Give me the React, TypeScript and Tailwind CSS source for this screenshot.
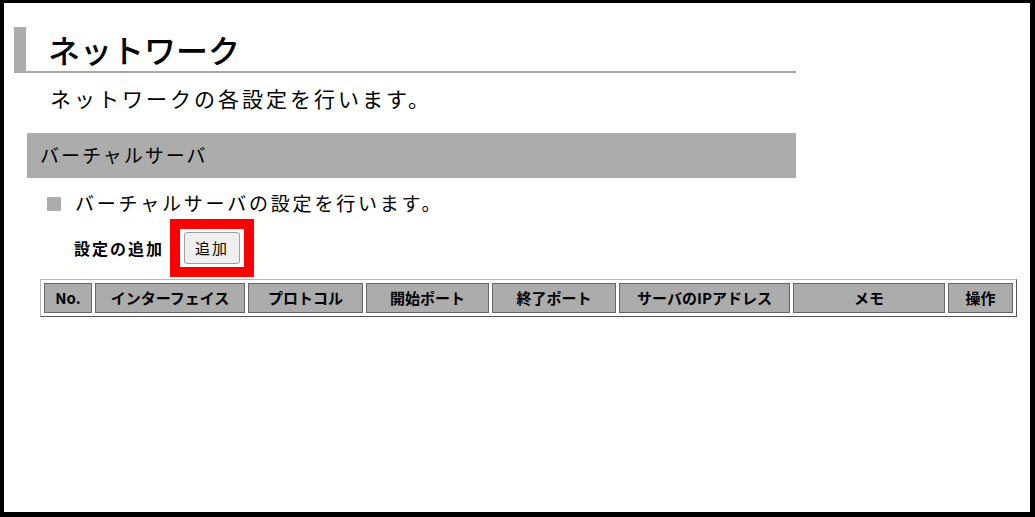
const columns = [
  { label: "No.", width: "w-[48px]" },
  { label: "インターフェイス", width: "w-[150px]" },
  { label: "プロトコル", width: "w-[115px]" },
  { label: "開始ポート", width: "w-[123px]" },
  { label: "終了ポート", width: "w-[124px]" },
  { label: "サーバのIPアドレス", width: "w-[171px]" },
  { label: "メモ", width: "w-[152px]" },
  { label: "操作", width: "w-[65px]" }
];

export default function App() {
  return (
    <div className="h-[517px] w-[1035px] overflow-hidden border-b-[5px] border-l-4 border-r-[5px] border-t-[3px] border-black bg-white font-['Noto_Sans_CJK_JP','Noto_Sans',sans-serif] text-black">
      <div className="pl-[10px] pt-[24px]">
        <div className="flex h-[46px] w-[782px] border-b-2 border-[#a8a8a8]">
          <div className="w-[12px] bg-[#acacac]" />
          <h1 className="ml-[22px] text-[32px] font-medium leading-[44px]">ネットワーク</h1>
        </div>

        <p className="ml-[36px] mt-[12px] text-[21px] leading-[26px] tracking-[3px]">ネットワークの各設定を行います。</p>

        <div className="ml-[13px] mt-[22px] flex h-[45px] w-[769px] items-center bg-[#acacac] pl-[13px] text-[19px] tracking-[2px]">
          バーチャルサーバ
        </div>

        <div className="ml-[33px] mt-[12px] flex h-[26px] items-center">
          <span className="mt-[2px] h-[14px] w-[14px] bg-[#acacac]" />
          <span className="ml-[14px] text-[19px] leading-[26px] tracking-[2.8px]">バーチャルサーバの設定を行います。</span>
        </div>

        <div className="ml-[60px] mt-[3px] flex h-[58px] items-center">
          <span className="w-[96px] text-[16px] font-bold tracking-[2px]">設定の追加</span>
          <div className="flex h-[58px] w-[84px] items-center justify-center border-[10px] border-[#ff0000] bg-white">
            <button className="h-[32px] w-[56px] rounded-[3px] border border-[#a0a0a0] bg-[#efefef] text-[15px] tracking-[2px]" type="button">
              追加
            </button>
          </div>
        </div>

        <table className="ml-[26px] mt-[2px] w-[977px] table-fixed border-separate border-spacing-[3px] border border-b-[#555555] border-l-[#b8b8b8] border-r-[#555555] border-t-[#b8b8b8]">
          <thead>
            <tr>
              {columns.map((column) => (
                <th
                  key={column.label}
                  className={`${column.width} h-[30px] border border-[#666666] bg-[#acacac] p-0 text-center text-[15px] font-bold leading-[28px]`}
                >
                  {column.label}
                </th>
              ))}
            </tr>
          </thead>
        </table>
      </div>
    </div>
  );
}
